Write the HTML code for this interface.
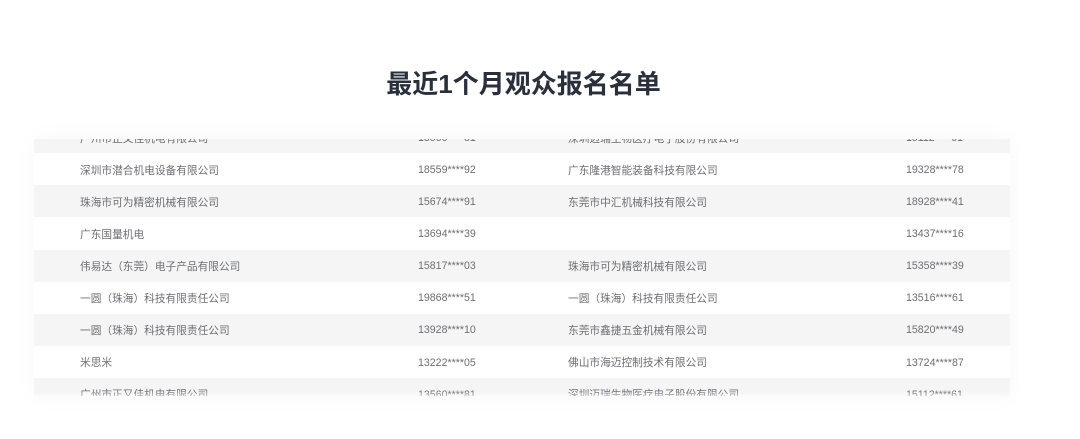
<!DOCTYPE html>
<html lang="zh-CN">
<head>
<meta charset="utf-8">
<style>
html,body{margin:0;padding:0;width:1080px;height:439px;overflow:hidden;background:#fff}
body{position:relative;font-family:"Liberation Sans","Noto Sans CJK SC",sans-serif}
h1{position:absolute;left:0;top:67px;width:1047px;margin:0;text-align:center;font-size:26px;line-height:34px;font-weight:700;color:#2a2f3c;filter:blur(.3px)}
.shadow{position:absolute;left:34px;top:139px;width:976px;height:257px;box-shadow:0 0 24px rgba(0,0,0,.03)}
.clip{position:absolute;left:34px;top:139px;width:976px;height:257px;overflow:hidden;background:#fff}
.inner{position:absolute;left:0;top:0;width:976px;height:257px;filter:blur(.35px)}
.r{position:absolute;left:0;width:976px;height:32.1px;font-size:10.7px;line-height:32.1px;color:#6c6e73}
.g{background:#f5f5f5}
.r span{position:absolute;top:1.6px;white-space:nowrap}
.r .b,.r .d{top:.8px;font-size:10.6px}
.a{left:46px}.b{left:384px}.c{left:534px}.d{left:872px}
.fade{position:absolute;left:0;bottom:0;width:976px;height:5px;background:linear-gradient(to bottom,rgba(255,255,255,0),rgba(255,255,255,.5))}
</style>
</head>
<body>
<h1>最近1个月观众报名名单</h1>
<div class="shadow"></div>
<div class="clip">
<div class="inner">
<div class="r g" style="top:-17.9px"><span class="a">广州市正又佳机电有限公司</span><span class="b">13560****81</span><span class="c">深圳迈瑞生物医疗电子股份有限公司</span><span class="d">15112****61</span></div>
<div class="r" style="top:14.2px"><span class="a">深圳市潜合机电设备有限公司</span><span class="b">18559****92</span><span class="c">广东隆港智能装备科技有限公司</span><span class="d">19328****78</span></div>
<div class="r g" style="top:46.3px"><span class="a">珠海市可为精密机械有限公司</span><span class="b">15674****91</span><span class="c">东莞市中汇机械科技有限公司</span><span class="d">18928****41</span></div>
<div class="r" style="top:78.4px"><span class="a">广东国量机电</span><span class="b">13694****39</span><span class="d">13437****16</span></div>
<div class="r g" style="top:110.5px"><span class="a">伟易达（东莞）电子产品有限公司</span><span class="b">15817****03</span><span class="c">珠海市可为精密机械有限公司</span><span class="d">15358****39</span></div>
<div class="r" style="top:142.6px"><span class="a">一圆（珠海）科技有限责任公司</span><span class="b">19868****51</span><span class="c">一圆（珠海）科技有限责任公司</span><span class="d">13516****61</span></div>
<div class="r g" style="top:174.7px"><span class="a">一圆（珠海）科技有限责任公司</span><span class="b">13928****10</span><span class="c">东莞市鑫捷五金机械有限公司</span><span class="d">15820****49</span></div>
<div class="r" style="top:206.8px"><span class="a">米思米</span><span class="b">13222****05</span><span class="c">佛山市海迈控制技术有限公司</span><span class="d">13724****87</span></div>
<div class="r g" style="top:238.9px"><span class="a">广州市正又佳机电有限公司</span><span class="b">13560****81</span><span class="c">深圳迈瑞生物医疗电子股份有限公司</span><span class="d">15112****61</span></div>
</div>
<div class="fade"></div>
</div>
</body>
</html>
